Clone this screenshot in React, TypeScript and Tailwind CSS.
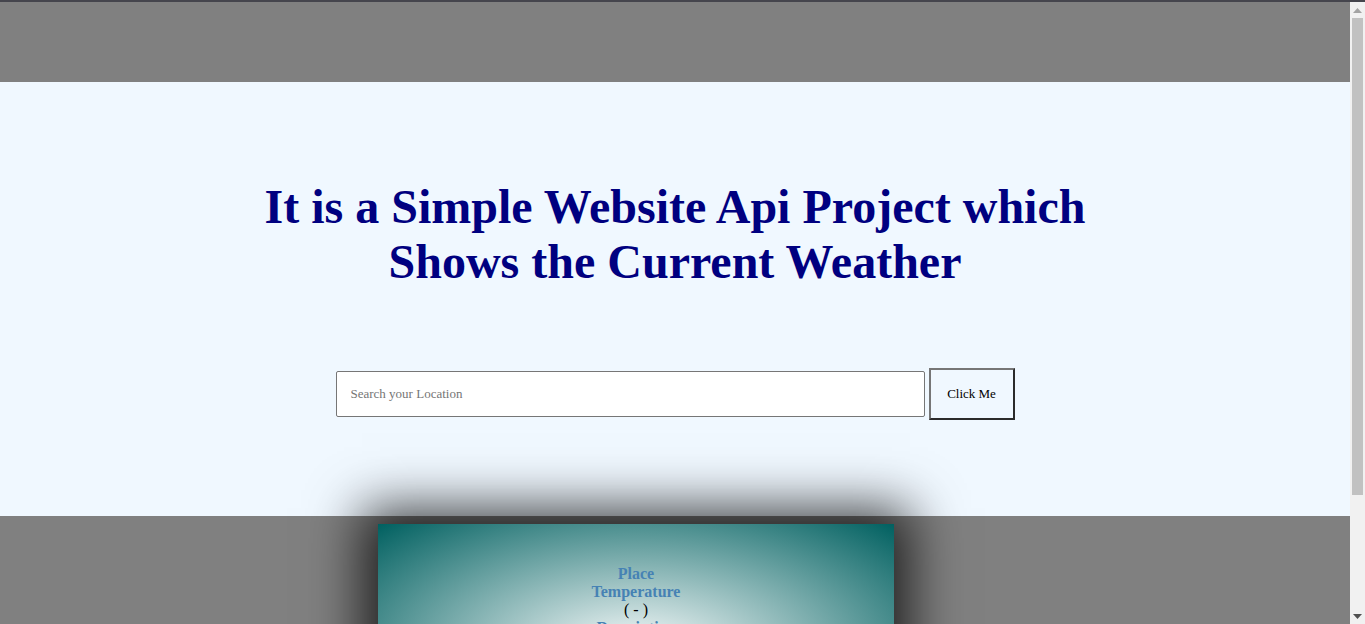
function FakeScrollbar() {
  return (
    <div className="w-[15px] shrink-0 bg-[#f1f1f1] flex flex-col items-center">
      <div className="h-[16px] flex items-center justify-center">
        <svg width="9" height="5" viewBox="0 0 9 5">
          <path d="M4.5 0 L9 5 L0 5 Z" fill="#a3a3a3" />
        </svg>
      </div>
      <div className="w-[11px] h-[477px] bg-[#c1c1c1]" />
      <div className="flex-1" />
      <div className="h-[16px] flex items-center justify-center">
        <svg width="9" height="5" viewBox="0 0 9 5">
          <path d="M0 0 L9 0 L4.5 5 Z" fill="#505050" />
        </svg>
      </div>
    </div>
  );
}

export default function App() {
  return (
    <div className="h-[624px] flex flex-col overflow-hidden bg-[#808080] font-['Liberation_Serif','Times_New_Roman',serif]">
      <div className="h-[2px] bg-[#45454d] shrink-0" />
      <div className="flex-1 flex min-h-0">
        <main className="flex-1 min-w-0 overflow-hidden">
          {/* top band */}
          <div className="h-[80px]" />

          {/* hero */}
          <section className="h-[434px] bg-[#f0f8ff] flex flex-col items-center">
            <h1 className="mt-[97px] w-[880px] text-center text-[48px] leading-[55px] font-bold text-[#000080]">
              It is a Simple Website Api Project which Shows the Current Weather
            </h1>
            <div className="mt-[79px] flex items-center gap-1">
              <input
                type="text"
                placeholder="Search your Location"
                className="w-[589px] h-[46px] bg-white border border-[#767676] rounded-[2px] px-[14px] text-[13px] text-black placeholder:text-[#757575] outline-none"
              />
              <button className="w-[86px] h-[52px] bg-[#f0f8ff] border-2 border-t-[#767676] border-l-[#767676] border-r-[#2b2b2b] border-b-[#2b2b2b] text-[13px] text-black">
                Click Me
              </button>
            </div>
          </section>

          {/* weather card */}
          <div className="pt-2 pl-[378px]">
            <div className="w-[516px] h-[260px] pt-[41px] flex flex-col items-center bg-[radial-gradient(ellipse_at_center,#ffffff,#006060)] shadow-[0_0_50px_16px_rgba(0,0,0,0.75)] text-[16px] leading-[18px]">
              <div className="font-bold text-[#4682b4]">Place</div>
              <div className="font-bold text-[#4682b4]">Temperature</div>
              <div className="text-black">( - )</div>
              <div className="font-bold text-[#4682b4]">Description</div>
              <div className="text-black">( - )</div>
            </div>
          </div>
        </main>
        <FakeScrollbar />
      </div>
    </div>
  );
}
